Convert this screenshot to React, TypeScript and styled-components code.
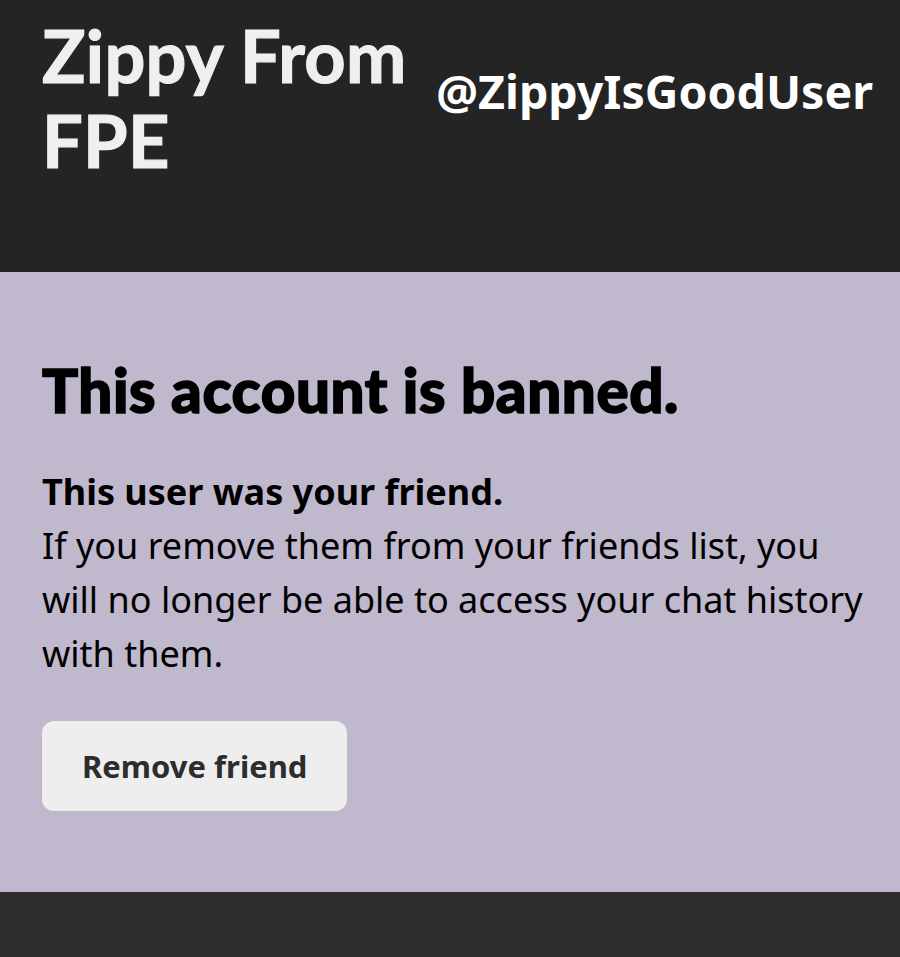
import * as React from "react";
import styled, { createGlobalStyle } from "styled-components";

const GlobalStyle = createGlobalStyle`
  html, body {
    margin: 0;
    padding: 0;
    background: #2d2d2d;
  }
  body {
    font-family: "Noto Sans", "Open Sans", sans-serif;
  }
`;

const Page = styled.div`
  width: 900px;
  min-height: 957px;
  display: flex;
  flex-direction: column;
  background: #2d2d2d;
`;

const Header = styled.header`
  height: 272px;
  box-sizing: border-box;
  padding: 13px 27px 0 42px;
  display: flex;
  align-items: flex-start;
  justify-content: space-between;
  background: #242424;
`;

const DisplayName = styled.h1`
  margin: 0;
  width: 380px;
  font-family: "Lato", sans-serif;
  font-weight: 700;
  font-size: 72px;
  line-height: 85px;
  letter-spacing: 0.3px;
  color: #efefef;
  -webkit-text-stroke: 1.2px #efefef;
`;

const Handle = styled.div`
  margin-top: 55px;
  font-family: "Noto Sans", sans-serif;
  font-weight: 700;
  font-size: 46.5px;
  line-height: 1;
  color: #ffffff;
`;

const Notice = styled.section`
  height: 620px;
  box-sizing: border-box;
  padding: 82px 36px 0 42px;
  background: #c0b8cc;
  color: #000;
`;

const Title = styled.h2`
  margin: 0 0 39px;
  font-family: "Lato", sans-serif;
  font-weight: 900;
  font-size: 60px;
  line-height: 1.2;
  letter-spacing: 0.6px;
  -webkit-text-stroke: 1.6px #000;
`;

const Lead = styled.div`
  font-weight: 700;
  font-size: 36px;
  line-height: 54px;
`;

const Body = styled.p`
  margin: 0 0 40px;
  font-size: 36px;
  line-height: 54px;
`;

const Button = styled.button`
  height: 90px;
  padding: 0 40px;
  border: none;
  border-radius: 12px;
  background: #eeeeee;
  color: #2d2d2d;
  font-family: "Noto Sans", sans-serif;
  font-weight: 700;
  font-size: 31px;
  cursor: pointer;
`;

const App = () => {
  return (
    <Page>
      <GlobalStyle />
      <Header>
        <DisplayName>Zippy From FPE</DisplayName>
        <Handle>@ZippyIsGoodUser</Handle>
      </Header>
      <Notice>
        <Title>This account is banned.</Title>
        <Lead>This user was your friend.</Lead>
        <Body>
          If you remove them from your friends list, you will no longer be able
          to access your chat history with them.
        </Body>
        <Button>Remove friend</Button>
      </Notice>
    </Page>
  );
};

export default App;
